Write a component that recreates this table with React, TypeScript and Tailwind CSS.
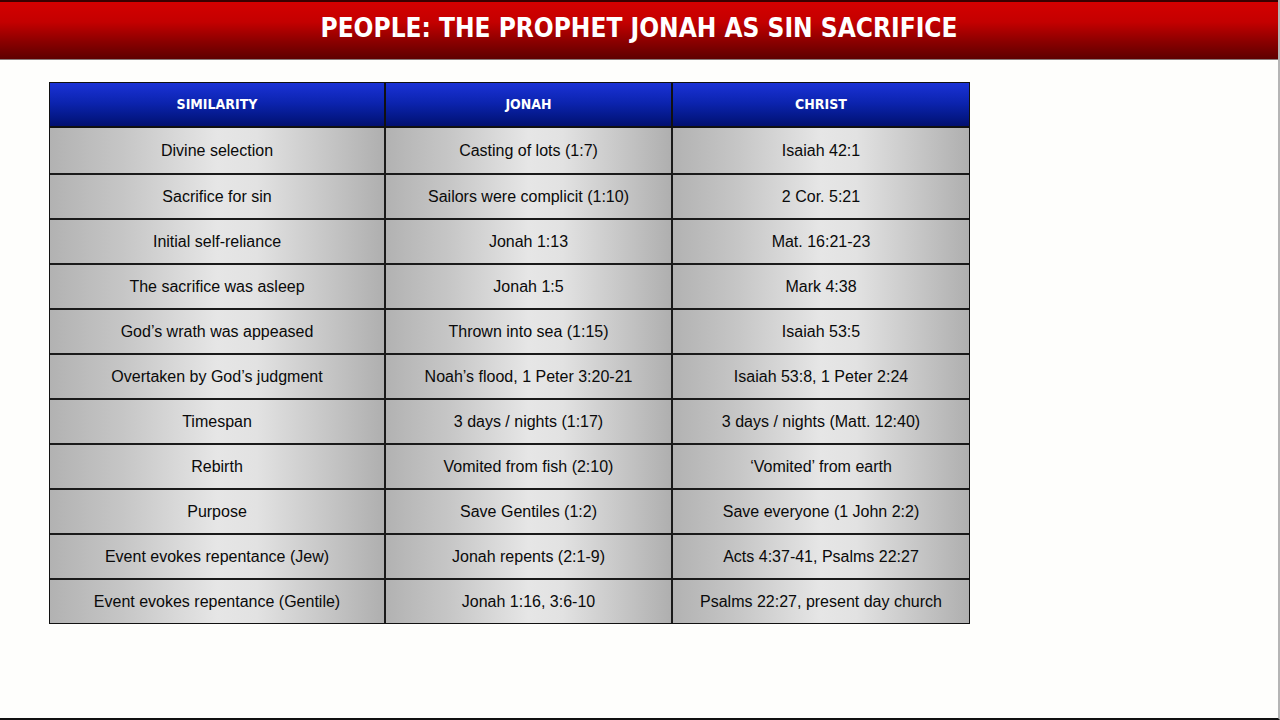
import React from 'react';

const rows: [string, string, string][] = [
  ['Divine selection', 'Casting of lots (1:7)', 'Isaiah 42:1'],
  ['Sacrifice for sin', 'Sailors were complicit (1:10)', '2 Cor. 5:21'],
  ['Initial self-reliance', 'Jonah 1:13', 'Mat. 16:21-23'],
  ['The sacrifice was asleep', 'Jonah 1:5', 'Mark 4:38'],
  ['God\u2019s wrath was appeased', 'Thrown into sea (1:15)', 'Isaiah 53:5'],
  ['Overtaken by God\u2019s judgment', 'Noah\u2019s flood, 1 Peter 3:20-21', 'Isaiah 53:8, 1 Peter 2:24'],
  ['Timespan', '3 days / nights (1:17)', '3 days / nights (Matt. 12:40)'],
  ['Rebirth', 'Vomited from fish (2:10)', '\u2018Vomited\u2019 from earth'],
  ['Purpose', 'Save Gentiles (1:2)', 'Save everyone (1 John 2:2)'],
  ['Event evokes repentance (Jew)', 'Jonah repents (2:1-9)', 'Acts 4:37-41, Psalms 22:27'],
  ['Event evokes repentance (Gentile)', 'Jonah 1:16, 3:6-10', 'Psalms 22:27, present day church'],
];

const headers = ['SIMILARITY', 'JONAH', 'CHRIST'];
const widths = ['w-[334px]', 'w-[287px]', 'w-[298px]'];

const App: React.FC = () => {
  return (
    <div className="w-[1280px] h-[720px] bg-[#fefefc] flex flex-col border-r-2 border-r-[#b5b5b5] border-b-2 border-b-[#111]">
      <div className="h-[60px] shrink-0 flex items-center justify-center border-t-2 border-t-[#3a0000] border-b border-b-[#8a7a7a] bg-[linear-gradient(180deg,#d40000_0%,#c40000_35%,#8a0000_70%,#5e0000_100%)]">
        <h1 className="text-white text-[26px] font-bold font-['DejaVu_Sans_Condensed','DejaVu_Sans',sans-serif] pb-[4px]">
          PEOPLE: THE PROPHET JONAH AS SIN SACRIFICE
        </h1>
      </div>

      <div className="pl-[49px] pt-[22px]">
        <div className="w-[921px] border border-[#111] font-['Liberation_Sans',Arial,sans-serif]">
          <div className="flex h-[45px] bg-[linear-gradient(180deg,#1a32d6_0%,#0c24b0_45%,#041888_80%,#021070_100%)] border-b-2 border-b-[#111]">
            {headers.map((h, i) => (
              <div
                key={h}
                className={`${widths[i]} flex items-center justify-center text-white text-[14px] font-bold font-['DejaVu_Sans_Condensed','DejaVu_Sans',sans-serif] ${i > 0 ? 'border-l-2 border-l-[#111]' : ''}`}
              >
                {h}
              </div>
            ))}
          </div>
          {rows.map((r, ri) => (
            <div key={ri} className={`flex h-[45px] ${ri > 0 ? 'border-t-2 border-t-[#1a1a1a]' : ''}`}>
              {r.map((c, ci) => (
                <div
                  key={ci}
                  className={`${widths[ci]} flex items-center justify-center pt-[1px] text-[16px] text-[#0a0a0a] bg-[linear-gradient(90deg,#b2b2b2_0%,#c6c6c6_22%,#e6e6e6_50%,#e2e2e2_62%,#cacaca_80%,#afafaf_100%)] ${ci > 0 ? 'border-l-2 border-l-[#1a1a1a]' : ''}`}
                >
                  {c}
                </div>
              ))}
            </div>
          ))}
        </div>
      </div>
    </div>
  );
};

export default App;
